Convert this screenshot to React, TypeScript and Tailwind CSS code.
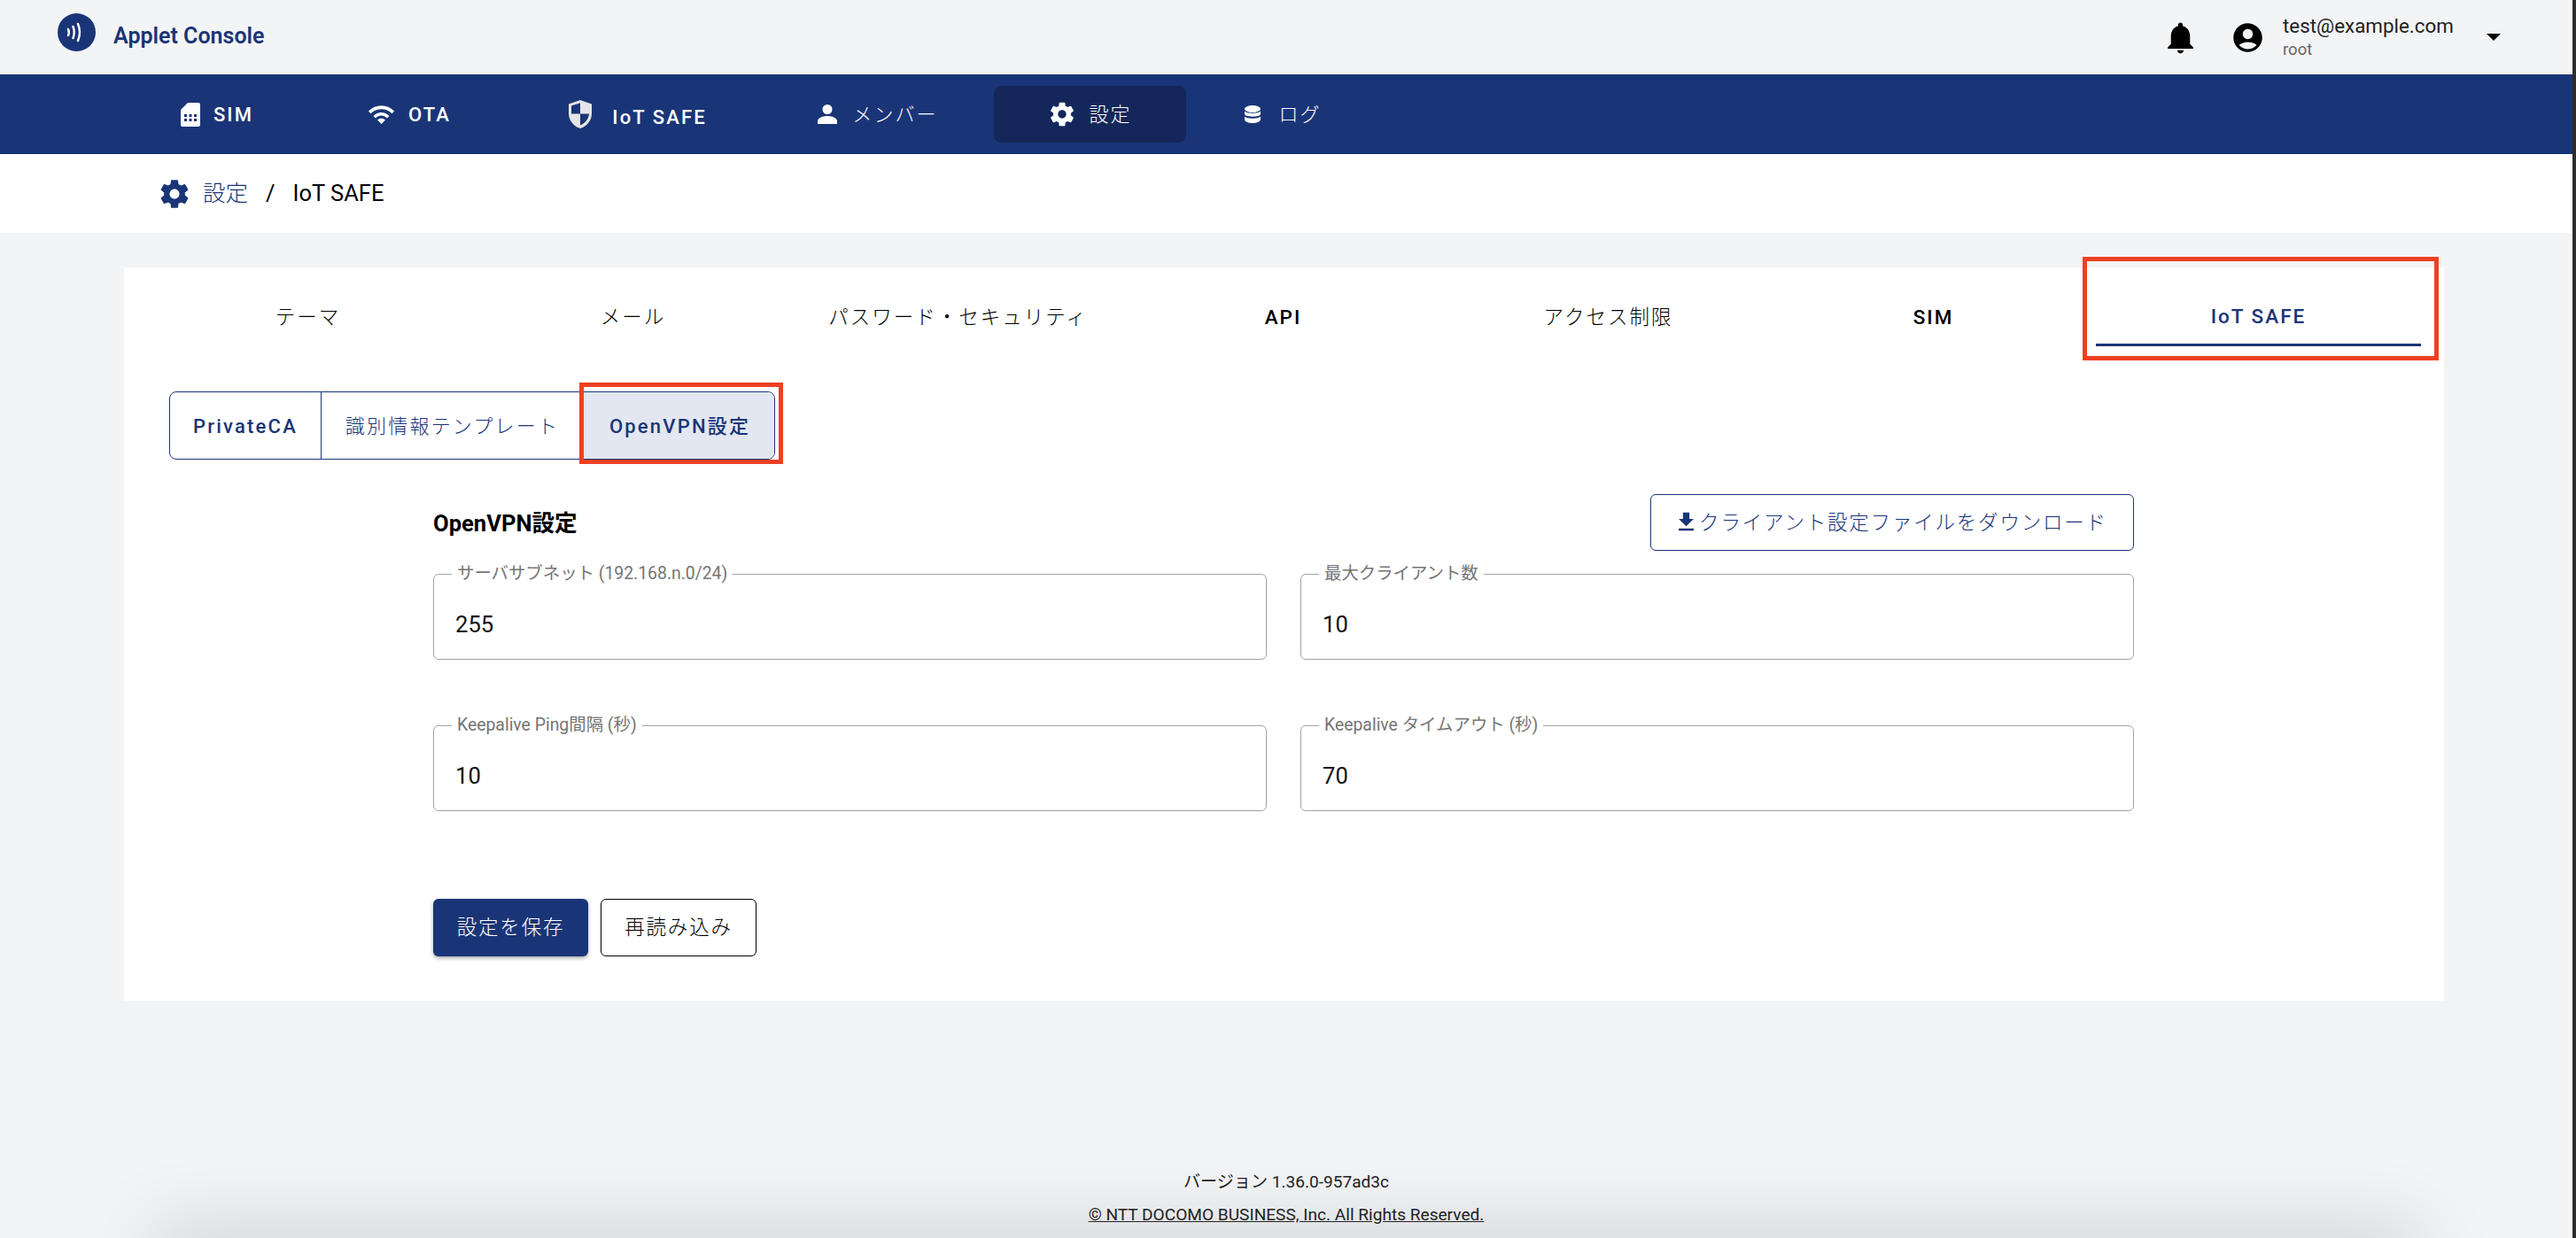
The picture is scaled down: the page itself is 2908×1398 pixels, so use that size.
import React from "react";

const font = "font-['Roboto','Noto_Sans_CJK_JP',sans-serif]";
const navy = "#1a3577";

function SimIcon() {
  return (
    <svg viewBox="0 0 22 27" className="w-[22px] h-[27px]" fill="#fff">
      <path fillRule="evenodd" d="M8 0h12a2 2 0 0 1 2 2v23a2 2 0 0 1-2 2H2a2 2 0 0 1-2-2V8zM4 13v3h3v-3zm5.500 0v3h3v-3zm5.500 0v3h3v-3zM4 18v3h3v-3zm5.500 0v3h3v-3zm5.500 0v3h3v-3z" />
    </svg>
  );
}
function WifiIcon() {
  return (
    <svg viewBox="0 0 29 21" className="w-[29px] h-[21px]" fill="#fff">
      <path d="M0 6.500C8-2 21-2 29 6.500l-2.500 2.700C20 2.500 9 2.500 2.500 9.200z" />
      <path d="M5.500 12C10.500 6.500 18.500 6.500 23.500 12L21 14.500c-3.800-4-9.200-4-13 0z" />
      <path d="M10 16.500c2.500-2.500 6.500-2.500 9 0L14.500 21z" />
    </svg>
  );
}
function ShieldIcon() {
  return (
    <svg viewBox="0 0 26 32" className="w-[26px] h-[32px]">
      <path fill="#e5e5e5" d="M13 0l13 4.500V15c0 8-5.400 14.500-13 17C5.400 29.500 0 23 0 15V4.500z" />
      <path fill={navy} d="M13 3.200V15.500H3V6.500zM13 15.500h10c-.5 6.300-4.800 10.800-10 13z" />
    </svg>
  );
}
function PersonIcon() {
  return (
    <svg viewBox="0 0 22 22" className="w-[22px] h-[22px]" fill="#fff">
      <circle cx="11" cy="5.500" r="5.500" />
      <path d="M0 22v-3c0-4 6-6 11-6s11 2 11 6v3z" />
    </svg>
  );
}
function GearIcon({ cls, color }: { cls: string; color: string }) {
  return (
    <svg viewBox="0 0 24 24" className={cls} fill={color}>
      <path d="M19.430 12.980c.04-.32.070-.64.070-.98s-.03-.66-.07-.98l2.110-1.650c.19-.15.240-.42.120-.64l-2-3.460c-.12-.22-.39-.3-.61-.22l-2.490 1c-.52-.4-1.080-.73-1.690-.98l-.38-2.650C14.460 2.180 14.250 2 14 2h-4c-.25 0-.46.180-.49.420l-.38 2.650c-.61.25-1.170.59-1.690.98l-2.490-1c-.23-.09-.49 0-.61.220l-2 3.460c-.13.220-.07.490.12.640l2.110 1.650c-.04.320-.07.650-.07.980s.03.660.07.980l-2.110 1.650c-.19.150-.24.420-.12.640l2 3.460c.12.220.39.300.61.220l2.490-1c.52.400 1.080.730 1.690.980l.38 2.650c.03.240.24.420.49.420h4c.25 0 .46-.18.490-.42l.38-2.650c.61-.25 1.170-.59 1.690-.98l2.490 1c.23.090.49 0 .61-.22l2-3.460c.12-.22.07-.49-.12-.64l-2.110-1.650zM12 15.500c-1.930 0-3.500-1.570-3.500-3.500s1.570-3.500 3.500-3.500 3.500 1.570 3.500 3.500-1.570 3.500-3.500 3.500z" />
    </svg>
  );
}
function DbIcon() {
  return (
    <svg viewBox="0 0 18 20" className="w-[18px] h-[20px]" fill="#fff">
      <ellipse cx="9" cy="4" rx="9" ry="4" />
      <path d="M0 6.500C2 9.500 16 9.500 18 6.500V10c-1 3.500-17 3.500-18 0zM0 12.500c2 3 16 3 18 0V16c-1 5.300-17 5.300-18 0z" />
    </svg>
  );
}

function NavItem({ w, icon, label, active, gap, lower, cjk }: { w: string; icon: React.ReactNode; label: string; active?: boolean; gap: string; lower?: boolean; cjk?: boolean }) {
  return (
    <div className={`${w} h-[64px] flex items-center justify-center rounded-lg text-[22px] tracking-[2.100px] text-white ${cjk ? "font-light" : "font-medium"} ${gap} ${active ? "bg-[#14275a]" : ""}`}>
      {icon}
      <span className={lower ? "mt-[6px]" : ""}>{label}</span>
    </div>
  );
}

function Field({ label, value }: { label: string; value: string }) {
  return (
    <fieldset className="flex-1 h-[108px] -mt-[11px] border border-[#a3a3a3] rounded-[6px] pl-[14px] pr-[14px] min-w-0">
      <legend className="px-[6px] text-[19.400px] leading-[22px] text-[#757575] ml-[6px] font-normal">{label}</legend>
      <div className="pl-[10px] pt-[28px] text-[25.600px] leading-[36px] text-[#111]">{value}</div>
    </fieldset>
  );
}

const tabs = ["テーマ", "メール", "パスワード・セキュリティ", "API", "アクセス制限", "SIM", "IoT SAFE"];

export default function App() {
  return (
    <div className={`${font} relative w-[2908px] h-[1398px] overflow-hidden bg-[#f3f4f6] flex flex-col border-r-4 border-r-[#2d2d2d]`}>
      <header className="h-[84px] shrink-0 flex items-center pl-[65px] pr-[81px]">
        <svg viewBox="0 0 43 43" className="w-[43px] h-[43px] -mt-[12px]">
          <circle cx="21.500" cy="21.500" r="21.500" fill={navy} />
          <path d="M12 18c1 2.300 1 5 0 7M17.500 15c1.500 4 1.500 9 0 13M23 12c2.500 6 2.500 13 0 19" stroke="#fff" strokeWidth="2.500" fill="none" strokeLinecap="round" />
        </svg>
        <div className="ml-[20px] -mt-[2px] text-[25px] font-semibold text-[#1a3577]">Applet Console</div>
        <div className="ml-auto flex items-center">
          <svg viewBox="0 0 24 24" className="w-[43px] h-[43px]" fill="#000">
            <path d="M12 22c1.100 0 2-.9 2-2h-4c0 1.100.89 2 2 2zm6-6v-5c0-3.070-1.640-5.640-4.500-6.320V4c0-.83-.67-1.500-1.500-1.500s-1.500.67-1.500 1.500v.68C7.630 5.360 6 7.920 6 11v5l-2 2v1h16v-1l-2-2z" />
          </svg>
          <svg viewBox="0 0 24 24" className="w-[39px] h-[39px] ml-[35px]" fill="#000">
            <path d="M12 2C6.480 2 2 6.480 2 12s4.480 10 10 10 10-4.480 10-10S17.520 2 12 2zm0 4c1.930 0 3.500 1.570 3.500 3.500S13.930 13 12 13s-3.500-1.570-3.500-3.500S10.070 6 12 6zm0 14c-2.030 0-4.430-.82-6.140-2.880C7.550 15.800 9.680 15 12 15s4.450.8 6.140 2.120C16.430 19.180 14.030 20 12 20z" />
          </svg>
          <div className="ml-[20px] w-[230px] -mt-[2px]">
            <div className="text-[22.400px] leading-[30px] text-[#222]">test@example.com</div>
            <div className="text-[18.500px] leading-[24px] text-[#666]">root</div>
          </div>
          <svg viewBox="0 0 16 8" className="w-[16px] h-[8px]" fill="#000"><path d="M0 0h16L8 8z" /></svg>
        </div>
      </header>

      <nav className="h-[90px] shrink-0 bg-[#1a3577] flex items-center pl-[136px]">
        <NavItem w="w-[218px]" gap="gap-[15px]" icon={<SimIcon />} label="SIM" />
        <NavItem w="w-[217px]" gap="gap-[16px]" icon={<WifiIcon />} label="OTA" />
        <NavItem w="w-[298px]" gap="gap-[23px]" icon={<ShieldIcon />} label="IoT SAFE" lower />
        <NavItem w="w-[244px]" gap="gap-[17px]" cjk icon={<PersonIcon />} label="メンバー" />
        <div className="w-[9px]" />
        <NavItem w="w-[217px]" gap="gap-[14px]" cjk active icon={<GearIcon cls="w-[32px] h-[32px]" color="#fff" />} label="設定" />
        <NavItem w="w-[219px]" gap="gap-[20px]" cjk icon={<DbIcon />} label="ログ" />
      </nav>

      <div className="h-[89px] shrink-0 bg-white flex items-center pl-[178px] text-[25.500px]">
        <GearIcon cls="w-[38px] h-[38px]" color={navy} />
        <span className="ml-[13px] text-[#1a3577] font-light">設定</span>
        <span className="ml-[20px] text-black">/</span>
        <span className="ml-[20px] text-black">IoT SAFE</span>
      </div>

      <main className="mt-[39px] ml-[140px] w-[2619px] h-[828px] bg-white shrink-0 pl-[24px]">
        <div className="flex h-[89px]">
          {tabs.map((t, i) => (
            <div key={t} className={`w-[367px] h-[89px] flex items-center justify-center text-[22.500px] tracking-[2px] ${i === 6 ? "pt-[25px] text-[#1a3577] border-b-[3px] border-[#1a3577] font-medium" : i === 3 || i === 5 ? "pt-[24px] text-black font-medium" : "pt-[24px] text-black font-light"}`}>
              {t}
            </div>
          ))}
        </div>

        <div className="mt-[51px] ml-[27px] flex w-fit h-[77px] border-[1.500px] border-[#1a3577] rounded-lg text-[#1a3577] text-[22px] tracking-[2.200px] overflow-hidden">
          <div className="w-[171px] pt-[2px] flex items-center justify-center font-medium border-r-[1.500px] border-[#1a3577]">PrivateCA</div>
          <div className="w-[295px] pt-[2px] flex items-center justify-center font-light">識別情報テンプレート</div>
          <div className="w-[216px] pt-[2px] pl-[2px] flex items-center justify-center font-medium bg-[#e3e7f1] border-l-[1.500px] border-[#1a3577]">OpenVPN設定</div>
        </div>

        <section className="ml-[325px] w-[1920px] mt-[39px]">
          <div className="flex items-center justify-between h-[64px]">
            <div className="text-[25.600px] pt-[2px] font-bold text-black">OpenVPN設定</div>
            <div className="w-[546px] h-[64px] pt-[2px] pr-[4px] border-[1.500px] border-[#1a3577] rounded-[6px] flex items-center justify-center text-[#1a3577] text-[22.500px] tracking-[1.800px] font-light">
              <svg viewBox="0 0 24 24" className="w-[29px] h-[29px] -mt-[4px]" fill={navy}><path d="M19 9h-4V3H9v6H5l7 7 7-7zM5 18v2h14v-2H5z" /></svg>
              クライアント設定ファイルをダウンロード
            </div>
          </div>
          <div className="mt-[26px] flex gap-[38px]">
            <Field label="サーバサブネット (192.168.n.0/24)" value="255" />
            <Field label="最大クライアント数" value="10" />
          </div>
          <div className="mt-[74px] flex gap-[38px]">
            <Field label="Keepalive Ping間隔 (秒)" value="10" />
            <Field label="Keepalive タイムアウト (秒)" value="70" />
          </div>
          <div className="mt-[99px] flex gap-[14px] text-[22.500px] tracking-[1.800px] font-light">
            <div className="w-[175px] h-[65px] bg-[#1a3577] text-white rounded-[6px] flex items-center justify-center shadow-[0_2px_4px_rgba(0,0,0,0.35)]">設定を保存</div>
            <div className="w-[176px] h-[65px] border-[1.500px] border-black bg-white text-black rounded-[6px] flex items-center justify-center">再読み込み</div>
          </div>
        </section>
      </main>

      <div className="absolute left-[172px] w-[2560px] top-[1398px] h-[40px] shadow-[0_0_88px_rgba(0,0,0,0.24)]" />

      <footer className="relative mt-auto h-[100px] shrink-0 flex flex-col items-center text-[19.100px] text-[#222]">
        <div className="mt-[24px] leading-[26px]">バージョン 1.36.0-957ad3c</div>
        <div className="mt-[11px] leading-[26px] underline">© NTT DOCOMO BUSINESS, Inc. All Rights Reserved.</div>
      </footer>

      <div className="absolute left-[2351px] top-[290px] w-[402px] h-[117px] border-[5px] border-[#ee4023]" />
      <div className="absolute left-[654px] top-[432px] w-[230px] h-[92px] border-[5px] border-[#ee4023]" />
    </div>
  );
}
